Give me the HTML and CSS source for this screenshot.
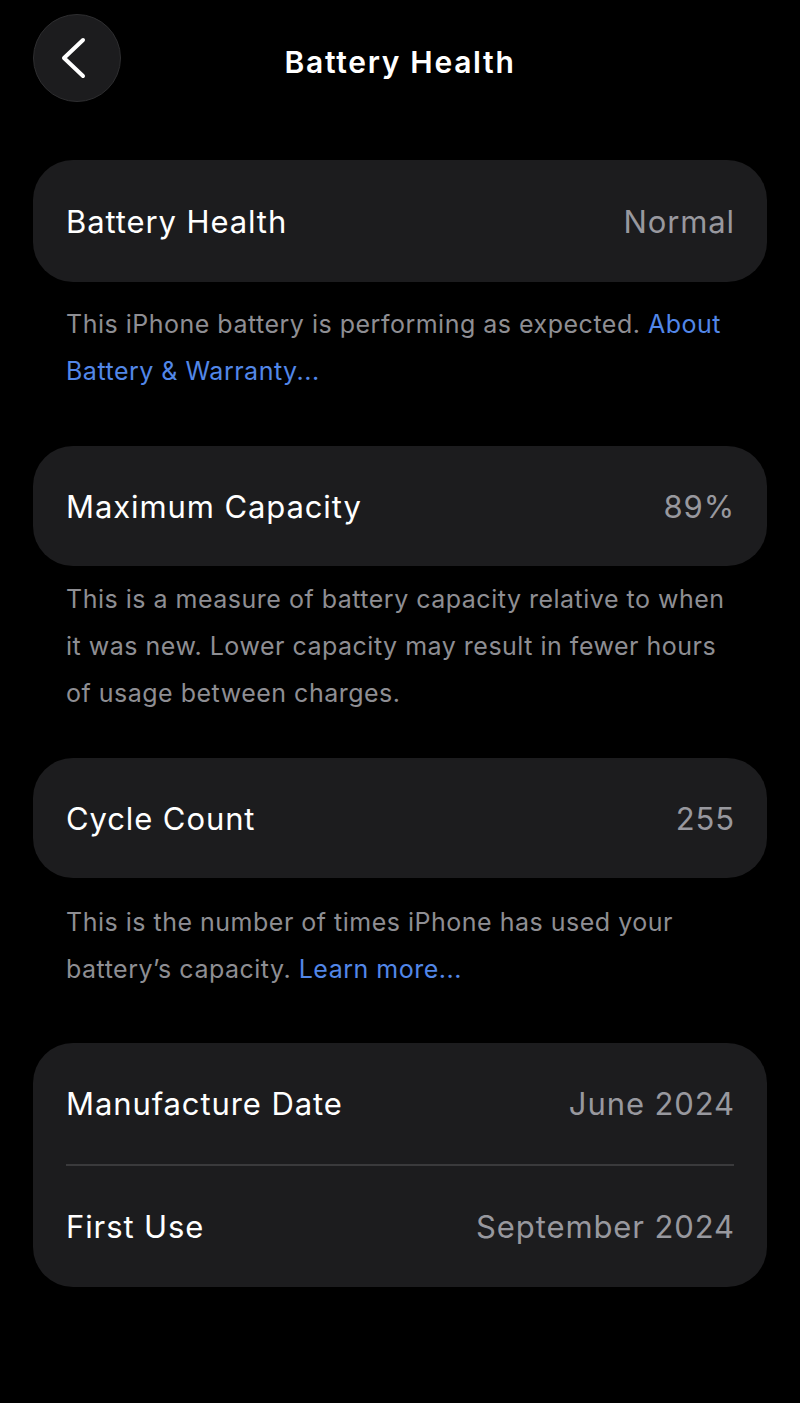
FILE: index.html
```html
<!DOCTYPE html>
<html lang="en">
<head>
<meta charset="utf-8">
<title>Battery Health</title>
<link rel="stylesheet" href="styles.css">
</head>
<body>
<div class="screen">
  <header class="nav">
    <button class="back" aria-label="Back">
      <svg width="40" height="44" viewBox="0 0 40 44"><path d="M29 4 L10 22 L29 40" fill="none" stroke="#fff" stroke-width="4" stroke-linecap="round" stroke-linejoin="round"/></svg>
    </button>
    <h1 class="title">Battery Health</h1>
    <span class="nav-spacer"></span>
  </header>

  <section class="card card-first">
    <div class="row"><span class="label">Battery Health</span><span class="value">Normal</span></div>
  </section>
  <p class="footer footer-a">This iPhone battery is performing as expected. <span class="link">About</span><br><span class="link">Battery &amp; Warranty...</span></p>

  <section class="card">
    <div class="row"><span class="label">Maximum Capacity</span><span class="value">89%</span></div>
  </section>
  <p class="footer footer-b">This is a measure of battery capacity relative to when<br>it was new. Lower capacity may result in fewer hours<br>of usage between charges.</p>

  <section class="card">
    <div class="row"><span class="label">Cycle Count</span><span class="value">255</span></div>
  </section>
  <p class="footer footer-c">This is the number of times iPhone has used your<br>battery’s capacity. <span class="link">Learn more...</span></p>

  <section class="card">
    <div class="row row-split"><span class="label">Manufacture Date</span><span class="value">June 2024</span></div>
    <div class="divider"></div>
    <div class="row row-split"><span class="label">First Use</span><span class="value">September 2024</span></div>
  </section>
</div>
</body>
</html>
```

FILE: styles.css
```css
html, body {
  margin: 0;
  padding: 0;
  background: #000;
}

body {
  font-family: Inter, "Noto Sans", "Liberation Sans", sans-serif;
  color: #fff;
}

.screen {
  padding: 14px 33px 0;
}

.nav {
  display: grid;
  grid-template-columns: 88px 1fr 88px;
  align-items: center;
  height: 88px;
  margin-bottom: 58px;
}

.back {
  width: 88px;
  height: 88px;
  border-radius: 50%;
  background: #1c1c1e;
  border: 1px solid #2e2e30;
  padding: 0;
  display: flex;
  align-items: center;
  justify-content: center;
}

.back svg {
  display: block;
  margin-left: -7px;
}

.title {
  margin: 7px 0 0;
  text-align: center;
  font-size: 30px;
  font-weight: 600;
  letter-spacing: 1.7px;
}

.card {
  background: #1c1c1e;
  border-radius: 40px;
}

.row {
  display: flex;
  align-items: center;
  justify-content: space-between;
  height: 120px;
  padding: 0 33px;
  font-size: 31px;
  letter-spacing: 0.9px;
}

.card-first .row {
  height: 122px;
}

.row-split {
  height: 121px;
}

.label {
  color: #fff;
}

.value {
  color: #98989e;
  margin-right: -1px;
}

.divider {
  height: 2px;
  margin: 0 33px;
  background: #3a3a3c;
}

.footer {
  margin: 0;
  padding: 19px 33px 51px;
  font-size: 25px;
  line-height: 47px;
  letter-spacing: 0.5px;
  color: #8e8e93;
  white-space: nowrap;
}

.footer-b {
  padding-top: 10px;
  padding-bottom: 41px;
}

.footer-c {
  padding-top: 21px;
  padding-bottom: 50px;
}

.link {
  color: #5287e8;
}
```
